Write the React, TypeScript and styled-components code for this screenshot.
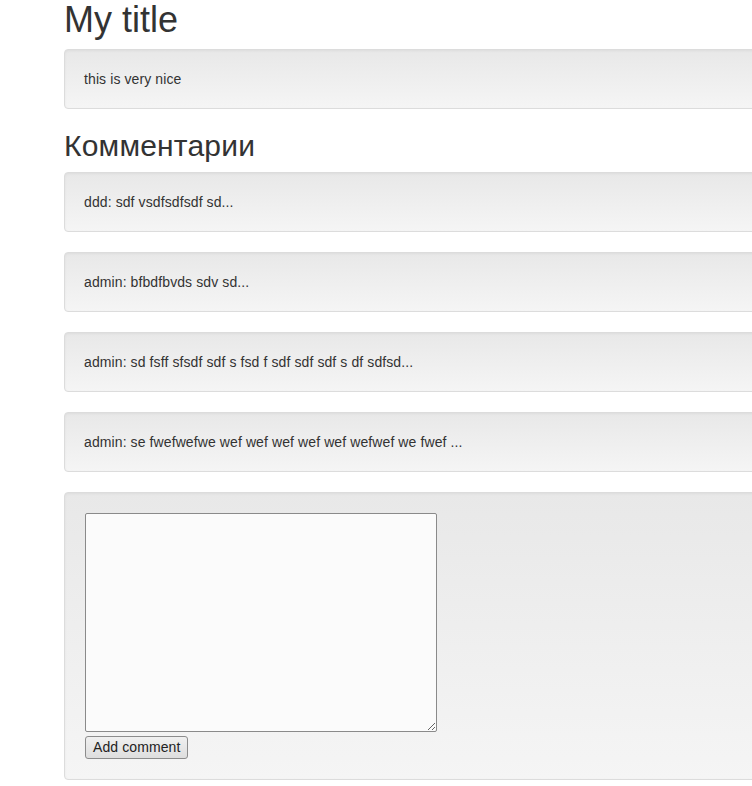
import styled, { createGlobalStyle } from "styled-components";

const GlobalStyle = createGlobalStyle`
  html, body {
    margin: 0;
    padding: 0;
    background: #fff;
    overflow-x: hidden;
  }
  body {
    font-family: "Liberation Sans", Arial, sans-serif;
    font-size: 14px;
    line-height: 1.42857;
    color: #333;
  }
`;

const Page = styled.div`
  margin-left: 64px;
  width: 900px;
`;

const Title = styled.h1`
  margin: 0 0 9px;
  font-size: 36px;
  font-weight: 500;
  line-height: 1.1;
`;

const SubTitle = styled.h2`
  margin: 20px 0 10px;
  font-size: 30px;
  font-weight: 500;
  line-height: 1.1;
  letter-spacing: 0.2px;
`;

const Well = styled.div`
  min-height: 20px;
  padding: 20px 19px 18px;
  margin-bottom: 20px;
  border: 1px solid #dcdcdc;
  border-radius: 4px;
  background-color: #f5f5f5;
  background-image: linear-gradient(to bottom, #e8e8e8 0%, #f5f5f5 100%);
  box-shadow: inset 0 1px 3px rgba(0, 0, 0, 0.05), 0 1px 0 rgba(255, 255, 255, 0.1);
  letter-spacing: 0.1px;
`;

const Form = styled.form`
  display: flex;
  flex-direction: column;
  align-items: flex-start;
  margin-top: -1px;
  padding-bottom: 2px;
`;

const TextArea = styled.textarea`
  box-sizing: border-box;
  width: 352px;
  height: 219px;
  margin: 1px 0 4px 1px;
  padding: 2px;
  border: 1px solid #8a8a8a;
  border-radius: 2px;
  background: #fbfbfb;
  font-family: "Liberation Sans", Arial, sans-serif;
  font-size: 14px;
`;

const Button = styled.button`
  box-sizing: border-box;
  height: 23px;
  margin-left: 1px;
  padding: 0 7px;
  border: 1px solid #8c8c8c;
  border-radius: 3px;
  background: linear-gradient(to bottom, #f0f0f0 0%, #dedede 100%);
  color: #222;
  font-family: "Liberation Sans", Arial, sans-serif;
  font-size: 14px;
  line-height: 20px;
  letter-spacing: 0.1px;
`;

const comments = [
  "ddd: sdf vsdfsdfsdf sd...",
  "admin: bfbdfbvds sdv sd...",
  "admin: sd fsff sfsdf sdf s fsd f sdf sdf sdf s df sdfsd...",
  "admin: se fwefwefwe wef wef wef wef wef wefwef we fwef ...",
];

export default function App() {
  return (
    <>
      <GlobalStyle />
      <Page>
        <Title>My title</Title>
        <Well>this is very nice</Well>
        <SubTitle>Комментарии</SubTitle>
        {comments.map((c, i) => (
          <Well key={i}>{c}</Well>
        ))}
        <Well>
          <Form onSubmit={(e) => e.preventDefault()}>
            <TextArea />
            <Button type="submit">Add comment</Button>
          </Form>
        </Well>
      </Page>
    </>
  );
}
